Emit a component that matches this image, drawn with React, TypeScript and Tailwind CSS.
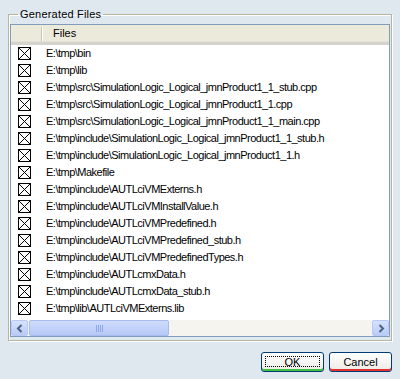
import React from "react";

const files = [
  "E:\\tmp\\bin",
  "E:\\tmp\\lib",
  "E:\\tmp\\src\\SimulationLogic_Logical_jmnProduct1_1_stub.cpp",
  "E:\\tmp\\src\\SimulationLogic_Logical_jmnProduct1_1.cpp",
  "E:\\tmp\\src\\SimulationLogic_Logical_jmnProduct1_1_main.cpp",
  "E:\\tmp\\include\\SimulationLogic_Logical_jmnProduct1_1_stub.h",
  "E:\\tmp\\include\\SimulationLogic_Logical_jmnProduct1_1.h",
  "E:\\tmp\\Makefile",
  "E:\\tmp\\include\\AUTLciVMExterns.h",
  "E:\\tmp\\include\\AUTLciVMInstallValue.h",
  "E:\\tmp\\include\\AUTLciVMPredefined.h",
  "E:\\tmp\\include\\AUTLciVMPredefined_stub.h",
  "E:\\tmp\\include\\AUTLciVMPredefinedTypes.h",
  "E:\\tmp\\include\\AUTLcmxData.h",
  "E:\\tmp\\include\\AUTLcmxData_stub.h",
  "E:\\tmp\\lib\\AUTLciVMExterns.lib",
];

function CheckX() {
  return (
    <svg width="13" height="13" viewBox="0 0 13 13" className="block">
      <rect x="0.5" y="0.5" width="12" height="12" fill="white" stroke="black" />
      <path d="M1 1 L12 12 M12 1 L1 12" stroke="black" strokeWidth="1" />
    </svg>
  );
}

function Arrow({ dir }: { dir: "left" | "right" }) {
  return (
    <svg width="8" height="9" viewBox="0 0 8 9">
      {dir === "left" ? (
        <path d="M5.5 1 L2 4.5 L5.5 8" stroke="#4d6185" strokeWidth="2" fill="none" />
      ) : (
        <path d="M2.5 1 L6 4.5 L2.5 8" stroke="#4d6185" strokeWidth="2" fill="none" />
      )}
    </svg>
  );
}

export default function App() {
  return (
    <div
      className="w-[400px] h-[379px] bg-[#dfe7ef] flex flex-col text-[11px] text-black"
      style={{ fontFamily: '"Liberation Sans", Arial, sans-serif' }}
    >
      <fieldset className="mx-[8px] mt-[8px] h-[333px] border border-[#b7b49f] shadow-[inset_1px_1px_0_white,1px_1px_0_white] px-[1px] pb-[2px] pt-0 min-w-0">
        <legend className="ml-[8px] px-[2px] leading-[13px] tracking-[0.2px]">Generated Files</legend>
        <div className="mt-[3px] h-[313px] border border-[#7f9db9] bg-white flex flex-col overflow-hidden">
          <div className="h-[20px] bg-[#ebeadb] flex items-stretch relative shrink-0 border-b-[3px] border-[#d6d3ce] shadow-[inset_0_-1px_0_#e2e2da]">
            <div className="w-[32px] flex items-center justify-end">
              <div className="w-[2px] h-[14px] border-l border-[#c7c5b2] bg-white" />
            </div>
            <div className="pl-[10px] flex items-center">Files</div>
          </div>
          <div className="flex flex-col flex-1">
            {files.map((f) => (
              <div key={f} className="h-[17px] flex items-center shrink-0">
                <div className="w-[35px] pl-[7px] flex items-center">
                  <CheckX />
                </div>
                <span className="whitespace-nowrap tracking-[-0.5px]">{f}</span>
              </div>
            ))}
          </div>
          <div className="h-[16px] flex shrink-0 bg-[#f5f4ee]">
            <div className="w-[17px] h-[16px] rounded-[2px] border border-[#b6c8f7] bg-gradient-to-b from-[#d6e2fd] to-[#b9cbf6] flex items-center justify-center">
              <Arrow dir="left" />
            </div>
            <div className="flex-1 flex px-[1px]">
              <div className="w-[140px] h-[16px] rounded-[2px] border border-[#a6bbef] bg-gradient-to-b from-[#cfdcfd] to-[#b6c8f6] flex items-center justify-center">
                <div className="flex gap-[1px]">
                  <div className="w-[1px] h-[7px] bg-[#8fa6e6]" />
                  <div className="w-[1px] h-[7px] bg-[#8fa6e6]" />
                  <div className="w-[1px] h-[7px] bg-[#8fa6e6]" />
                  <div className="w-[1px] h-[7px] bg-[#8fa6e6]" />
                </div>
              </div>
            </div>
            <div className="w-[17px] h-[16px] rounded-[2px] border border-[#b6c8f7] bg-gradient-to-b from-[#d6e2fd] to-[#b9cbf6] flex items-center justify-center">
              <Arrow dir="right" />
            </div>
          </div>
        </div>
      </fieldset>
      <div className="flex justify-end gap-[5px] pr-[8px] mt-[11px]">
        <button className="relative w-[63px] h-[20px] rounded-[3px] border border-[#003c74] bg-gradient-to-b from-white to-[#ecebe6] flex items-center justify-center shadow-[inset_0_-2px_0_#3fc23f]">
          <span className="absolute inset-[3px] bottom-[4px] border border-dotted border-black" />
          <span className="relative leading-none">OK</span>
        </button>
        <button className="w-[63px] h-[20px] rounded-[3px] border border-[#003c74] bg-gradient-to-b from-white to-[#ecebe6] flex items-center justify-center shadow-[inset_0_-2px_0_#e53030]">
          <span className="leading-none">Cancel</span>
        </button>
      </div>
    </div>
  );
}
